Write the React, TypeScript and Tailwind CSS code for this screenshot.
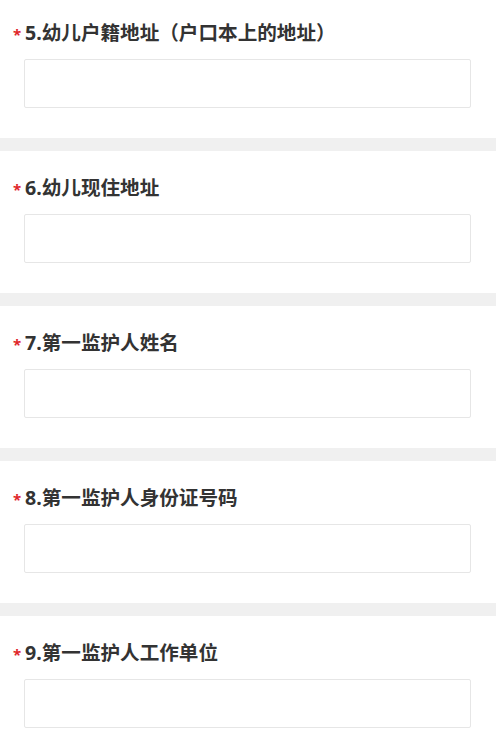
const questions = [
  '5.幼儿户籍地址（户口本上的地址）',
  '6.幼儿现住地址',
  '7.第一监护人姓名',
  '8.第一监护人身份证号码',
  '9.第一监护人工作单位',
];

function Question({ title }: { title: string }) {
  return (
    <div className="bg-white pt-[26px] pb-[30px]">
      <div className="flex items-center h-[22px] pl-[13px] mb-[15px]">
        <span className="w-[12px] text-[#e0262b] text-[15px] leading-none font-bold pt-[2px]">*</span>
        <span className="text-[19.6px] font-bold text-[#333333] leading-[22px]">{title}</span>
      </div>
      <div className="ml-[24px] mr-[25px] h-[49px] border border-[#e6e6e6] rounded-[2px] bg-white">
        <input className="w-full h-full px-3 outline-none bg-transparent" />
      </div>
    </div>
  );
}

export default function App() {
  return (
    <div
      className="w-[496px] h-[740px] overflow-hidden bg-white"
      style={{ fontFamily: '"Noto Sans", "Noto Sans CJK SC", sans-serif' }}
    >
      <div className="-mt-[4px]">
        {questions.map((q, i) => (
          <div key={q}>
            <Question title={q} />
            {i < questions.length - 1 && <div className="h-[13px] bg-[#f0f0f0]" />}
          </div>
        ))}
      </div>
    </div>
  );
}
